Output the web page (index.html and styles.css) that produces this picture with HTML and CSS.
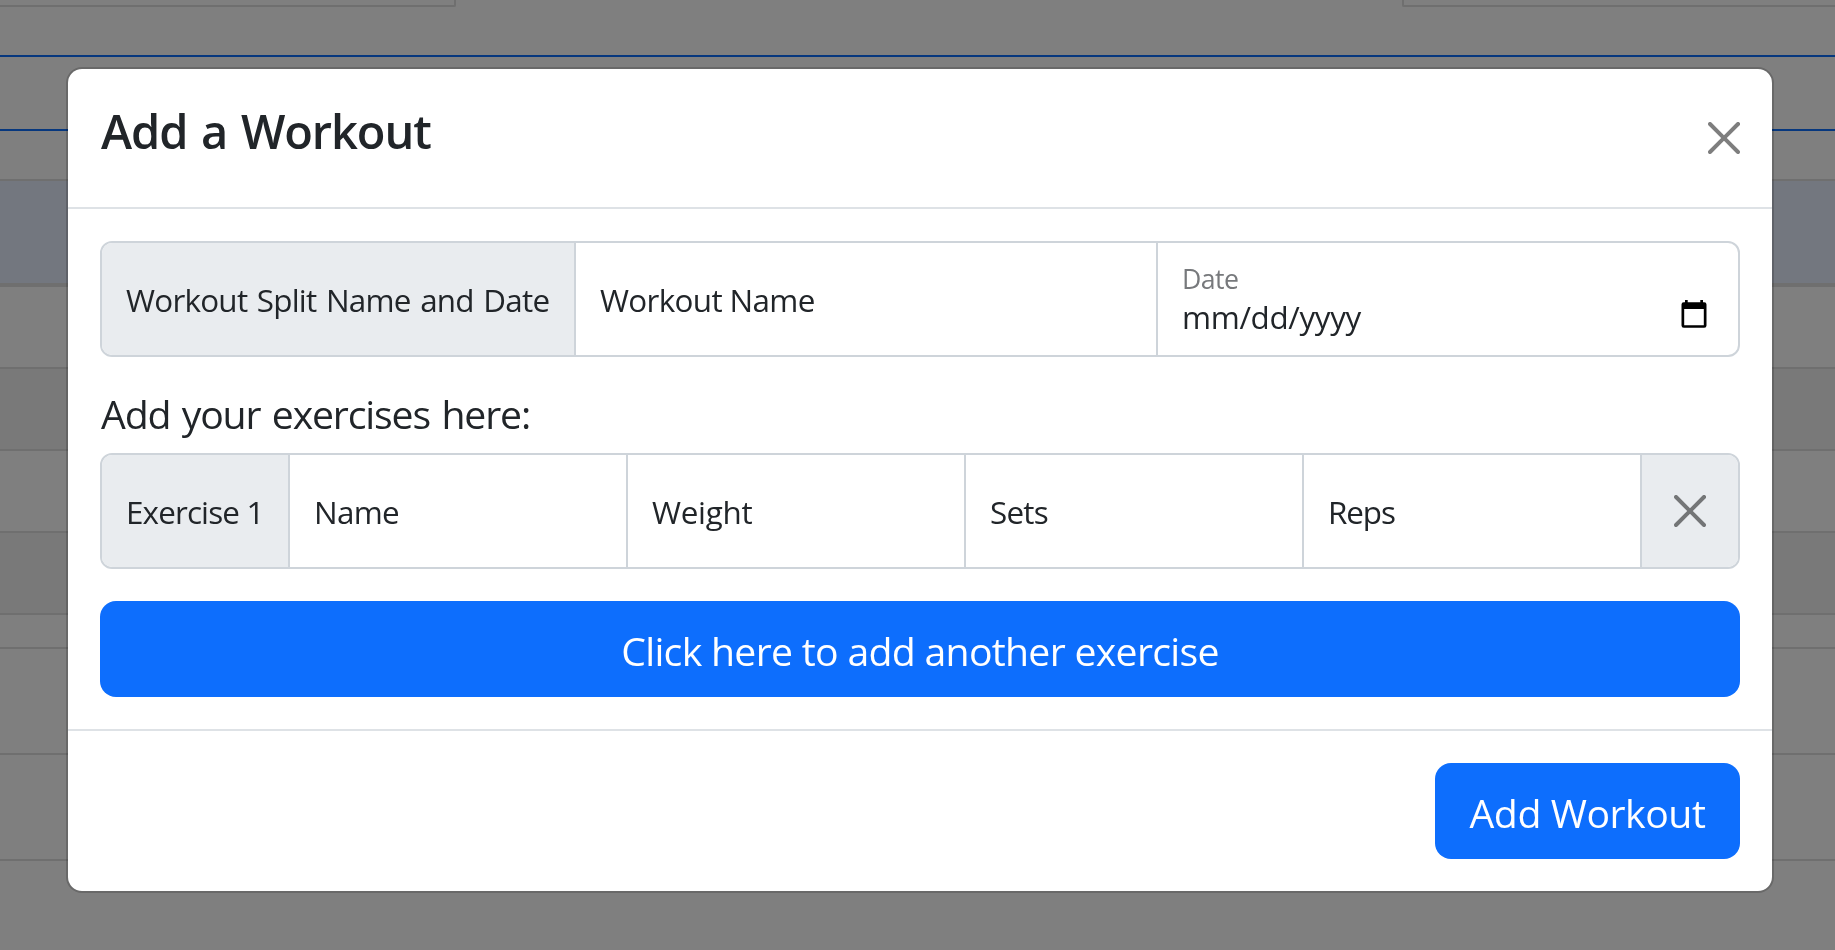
FILE: index.html
```
<!DOCTYPE html>
<html lang="en">
<head>
<meta charset="utf-8">
<title>Add a Workout</title>
<link rel="stylesheet" href="styles.css">
</head>
<body>
<main class="page">
  <div class="cards"><div class="card-edge card-left"></div><div class="card-edge card-right"></div></div>
  <div class="outline-box"></div>
  <div class="table">
    <div class="row head"></div>
    <div class="row"></div>
    <div class="row striped"></div>
    <div class="row"></div>
    <div class="row striped"></div>
  </div>
  <div class="list">
    <div class="item"></div>
    <div class="item"></div>
  </div>
</main>
<div class="overlay">
  <section class="modal" role="dialog" aria-labelledby="title">
    <header class="modal-header">
      <h1 class="title" id="title">Add a Workout</h1>
      <svg class="close" viewBox="0 0 16 16"><path d="M.293.293a1 1 0 0 1 1.414 0L8 6.586 14.293.293a1 1 0 1 1 1.414 1.414L9.414 8l6.293 6.293a1 1 0 0 1-1.414 1.414L8 9.414l-6.293 6.293a1 1 0 0 1-1.414-1.414L6.586 8 .293 1.707a1 1 0 0 1 0-1.414z"/></svg>
    </header>
    <div class="modal-body">
      <div class="group group-split">
        <div class="cell addon t-split">Workout Split Name and Date</div>
        <div class="cell t-wname">Workout Name</div>
        <div class="cell date-cell">
          <span class="date-label">Date</span>
          <div class="date-row">
            <span class="date-value">mm/dd/yyyy</span>
            <svg class="calendar" viewBox="0 0 26 28"><path fill-rule="evenodd" d="M4 0h2.7v2.3h12.600V0H22v2.300h1.200A2.300 2.300 0 0 1 25.500 4.600v20.800a2.300 2.300 0 0 1-2.300 2.300H2.800A2.300 2.300 0 0 1 .5 25.400V4.600A2.300 2.300 0 0 1 2.800 2.300H4zM3.200 9v16.200h19.600V9z"/></svg>
          </div>
        </div>
      </div>
      <h2 class="subtitle">Add your exercises here:</h2>
      <div class="group group-exercise">
        <div class="cell addon t-exercise">Exercise 1</div>
        <div class="cell t-name">Name</div>
        <div class="cell t-weight">Weight</div>
        <div class="cell t-sets">Sets</div>
        <div class="cell t-reps">Reps</div>
        <div class="cell addon remove">
          <svg class="close" viewBox="0 0 16 16"><path d="M.293.293a1 1 0 0 1 1.414 0L8 6.586 14.293.293a1 1 0 1 1 1.414 1.414L9.414 8l6.293 6.293a1 1 0 0 1-1.414 1.414L8 9.414l-6.293 6.293a1 1 0 0 1-1.414-1.414L6.586 8 .293 1.707a1 1 0 0 1 0-1.414z"/></svg>
        </div>
      </div>
      <button class="btn btn-block">Click here to add another exercise</button>
    </div>
    <footer class="modal-footer">
      <button class="btn btn-submit">Add Workout</button>
    </footer>
  </section>
</div>
</body>
</html>
```
FILE: styles.css
```
* { box-sizing: border-box; }

body {
  margin: 0;
  height: 950px;
  overflow: hidden;
  background: #fff;
  color: #212529;
  font-family: "Open Sans", "Noto Sans", sans-serif;
}

/* Page behind the dialog */
.page { height: 950px; }
.cards { display: flex; justify-content: space-between; height: 7px; }
.card-edge { border-bottom: 2px solid #dfdfdf; }
.card-left { width: 456px; border-right: 2px solid #dfdfdf; border-bottom-right-radius: 2px; }
.card-right { width: 433px; border-left: 2px solid #dfdfdf; border-bottom-left-radius: 2px; }
.outline-box {
  height: 76px;
  margin-top: 48px;
  border-top: 2px solid #0d6efd;
  border-bottom: 2px solid #0d6efd;
}
.table { margin-top: 48px; border-top: 2px solid #dfdfdf; }
.row { height: 82px; border-bottom: 2px solid #dfdfdf; }
.row.head { height: 106px; background: #e7effe; border-bottom-width: 4px; }
.row.striped { background: #f2f2f2; }
.list { margin-top: 32px; border-top: 2px solid #dfdfdf; }
.item { height: 106px; border-bottom: 2px solid #dfdfdf; }

/* Dialog */
.overlay {
  position: fixed;
  inset: 0;
  padding: 67px 61px 0 66px;
  background: rgba(0, 0, 0, .5);
}
.modal {
  width: 1708px;
  border: 2px solid rgba(0, 0, 0, .175);
  border-radius: 16px;
  background: #fff;
  background-clip: padding-box;
}
.modal-header {
  display: flex;
  align-items: center;
  justify-content: space-between;
  height: 140px;
  padding: 32px;
  border-bottom: 2px solid #dee2e6;
}
.title {
  align-self: flex-start;
  margin: 0 0 0 1px;
  font-size: 47px;
  font-weight: 600;
  line-height: 61px;
  letter-spacing: -1.1px;
  word-spacing: 2.6px;
}
.close { width: 32px; height: 32px; opacity: .5; }
.modal-body { padding: 32px; }

.group {
  display: grid;
  height: 116px;
  overflow: hidden;
  border: 2px solid #ced4da;
  border-radius: 12px;
}
.group-split { grid-template-columns: 474px 582px 580px; }
.group-exercise { grid-template-columns: 188px repeat(4, 338px) 96px; }
.cell {
  display: flex;
  align-items: center;
  padding: 1px 0 0 24px;
  border-right: 2px solid #ced4da;
  font-size: 31.4px;
  white-space: nowrap;
}
.cell:last-child { border-right: 0; }
.addon { background: #e9ecef; }
.remove { justify-content: center; padding: 0; }

.t-split { letter-spacing: -.74px; word-spacing: 2px; }
.t-wname { letter-spacing: -.65px; }
.t-exercise { letter-spacing: -.85px; }
.t-name { letter-spacing: -.7px; }
.t-weight { letter-spacing: -.25px; }
.t-sets { letter-spacing: -.8px; }
.t-reps { letter-spacing: -1.1px; }

.date-cell { flex-direction: column; align-items: stretch; padding: 18px 31px 0 24px; }
.date-label {
  height: 36px;
  color: #77797c;
  font-size: 26.7px;
  line-height: 36px;
  letter-spacing: -.569px;
}
.date-row { display: flex; justify-content: space-between; }
.date-value { line-height: 40px; letter-spacing: -.359px; }
.calendar { width: 26px; height: 28px; margin-top: 3px; }

.subtitle {
  margin: 27px 0 9px 1px;
  font-size: 39.2px;
  font-weight: 400;
  line-height: 60px;
  letter-spacing: -1.15px;
  word-spacing: 2.4px;
}
.btn {
  height: 96px;
  padding: 2px 0 0;
  border: 0;
  border-radius: 16px;
  background: #0d6efd;
  color: #fff;
  font-family: inherit;
  font-size: 39.2px;
}
.btn-block { display: block; width: 100%; margin-top: 32px; letter-spacing: -.7px; }
.btn-submit { width: 305px; letter-spacing: -.448px; }
.modal-footer {
  display: flex;
  justify-content: flex-end;
  padding: 32px;
  border-top: 2px solid #dee2e6;
}
```
